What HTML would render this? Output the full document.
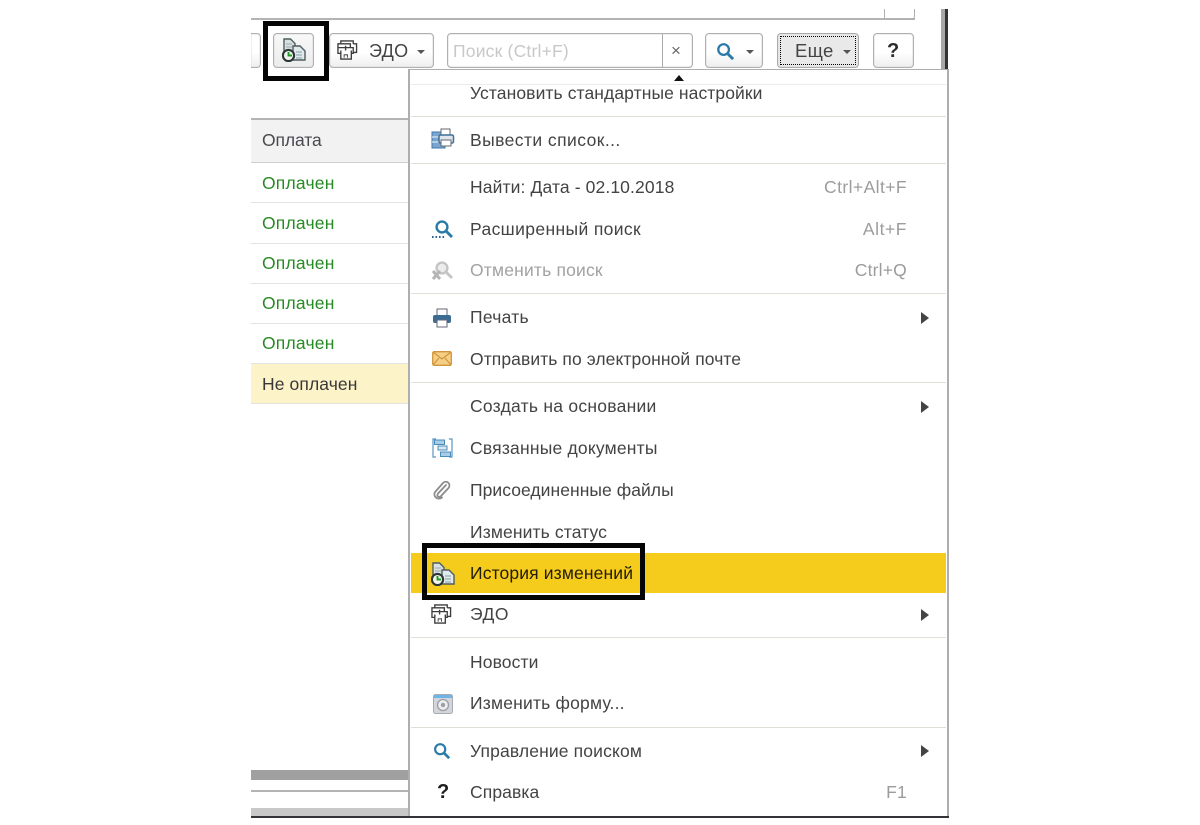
<!DOCTYPE html>
<html lang="ru"><head><meta charset="utf-8"><title>История изменений</title>
<style>
html,body{margin:0;padding:0;background:#fff}
#p{position:relative;width:1200px;height:825px;overflow:hidden;background:#fff;font-family:"Liberation Sans",sans-serif;color:#434343;filter:blur(.35px)}
#p div{position:absolute;box-sizing:border-box}
.t{font-size:17.5px;line-height:20px;height:20px;white-space:nowrap;left:470px;letter-spacing:.25px}
.k{font-size:17.5px;line-height:20px;height:20px;white-space:nowrap;right:293px;color:#9c9c9c;letter-spacing:.2px}
.s{left:411px;width:535px;height:1px;background:#e0e0d4}
.b{top:33px;height:35px;border:1px solid #b0b0b0;border-radius:4px;background:linear-gradient(#fff 55%,#eeeeee);box-shadow:inset 0 0 0 .5px #ddd}
.g{left:262px;font-size:17.5px;line-height:20px;height:20px;white-space:nowrap;color:#278a24;letter-spacing:.2px}
.l{left:251px;width:157px;height:1px;background:#e3e3e3}
.ar{left:921px;width:0;height:0;border-left:8px solid #444;border-top:6px solid transparent;border-bottom:6px solid transparent}
.dn{width:0;height:0;border-top:4px solid #555;border-left:4px solid transparent;border-right:4px solid transparent}
svg{position:absolute;overflow:visible}
</style></head><body><div id="p">
<svg width="0" height="0" style="left:0;top:0"><defs>
<symbol id="hist" viewBox="0 0 24 24"><path d="M2 1h6.500L13 5.500V17H2z" fill="#d9e1e2" stroke="#4f5d60" stroke-width="1.400"/><path d="M4 6h6M4 9h6" stroke="#9aa8ab"/><path d="M11 8h7l5 5v9H11z" fill="#e0e9eb" stroke="#4f5d60" stroke-width="1.400"/><path d="M14 14h6M14 17h6M14 20h6" stroke="#86a0a6" stroke-width="1.100"/><circle cx="6.500" cy="17.500" r="5.600" fill="#f2f5ee" stroke="#2c3736" stroke-width="2.100"/><path d="M6.500 14v3.500H10" stroke="#1f9a25" stroke-width="1.900" fill="none"/></symbol>
<symbol id="edo" viewBox="0 0 22 22"><path d="M1 8V4h13v4M4 4V1h13v3M17 4h3.500v9H17M1 8h16v6h-2M1 8v6h3" fill="none" stroke="#3c3c3c" stroke-width="1.400"/><path d="M4 11v9h11v-9M9 11V6" fill="none" stroke="#3c3c3c" stroke-width="1.400"/><path d="M7.500 18.500v-3h3.500v3" fill="none" stroke="#555" stroke-width="1.100"/></symbol>
<symbol id="mag" viewBox="0 0 20 20"><circle cx="8" cy="8" r="5.600" fill="none" stroke="#2a7aa8" stroke-width="2.400"/><path d="M12.500 12.500l5.500 5.500" stroke="#2a7aa8" stroke-width="3"/></symbol>
</defs></svg>

<!-- window frame -->
<div style="left:251px;top:18px;width:664px;height:2px;background:#b4b4b4"></div>
<div style="left:884px;top:9px;width:1px;height:10px;background:#b0b0b0"></div>
<div style="left:885px;top:9px;width:30px;height:11px;border-right:1px solid #b0b0b0;border-bottom:1px solid #b0b0b0;border-radius:0 0 4px 0"></div>
<div style="left:941px;top:9px;width:4px;height:60px;background:#a8a8a8"></div>
<div style="left:945px;top:9px;width:3px;height:60px;background:#333"></div>

<!-- toolbar -->
<div class="b" style="left:251px;width:10px;border-left:0;border-radius:0 4px 4px 0"></div>
<div class="b" style="left:273px;width:41px;background:linear-gradient(#f8f8f8,#ececec)"></div>
<svg style="left:282px;top:38px" width="24" height="24"><use href="#hist"/></svg>
<div class="b" style="left:329px;width:105px"></div>
<svg style="left:337px;top:40px" width="21" height="21"><use href="#edo"/></svg>
<div style="left:369px;top:41px;font-size:18px;line-height:20px;letter-spacing:.3px;color:#434343">ЭДО</div>
<div class="dn" style="left:417px;top:50px"></div>
<div class="b" style="left:447px;width:246px;background:#fff"></div>
<div style="left:662px;top:34px;width:1px;height:33px;background:#aaa"></div>
<div style="left:453px;top:41px;font-size:17.5px;line-height:20px;color:#c8c8c8;letter-spacing:.2px">Поиск (Ctrl+F)</div>
<div style="left:671px;top:41px;font-size:17px;line-height:20px;color:#666">×</div>
<div class="b" style="left:705px;width:58px"></div>
<svg style="left:716px;top:42px" width="19" height="19"><use href="#mag"/></svg>
<div class="dn" style="left:746px;top:50px"></div>
<div class="b" style="left:777px;width:82px;background:#e9e9e9;border-color:#aaa"></div>
<div style="left:780px;top:36px;width:76px;height:29px;border:1px dotted #000"></div>
<div style="left:795px;top:41px;font-size:18.5px;line-height:20px;color:#434343;letter-spacing:.3px">Еще</div>
<div class="dn" style="left:843px;top:50px"></div>
<div class="b" style="left:873px;width:41px"></div>
<div style="left:887px;top:40px;font-size:20px;line-height:22px;font-weight:bold;color:#2b2b2b">?</div>

<!-- table -->
<div style="left:251px;top:118px;width:157px;height:2px;background:#b4b4b4"></div>
<div style="left:251px;top:120px;width:157px;height:42px;background:#f2f2f2"></div>
<div style="left:251px;top:162px;width:157px;height:1px;background:#cfcfcf"></div>
<div style="left:262px;top:130px;font-size:17.5px;line-height:20px;letter-spacing:-.1px;color:#48484e">Оплата</div>
<div class="g" style="top:173px">Оплачен</div><div class="l" style="top:202px"></div>
<div class="g" style="top:213px">Оплачен</div><div class="l" style="top:243px"></div>
<div class="g" style="top:253px">Оплачен</div><div class="l" style="top:283px"></div>
<div class="g" style="top:293px">Оплачен</div><div class="l" style="top:323px"></div>
<div class="g" style="top:333px">Оплачен</div><div class="l" style="top:363px"></div>
<div style="left:251px;top:364px;width:157px;height:39px;background:#fdf3c9"></div>
<div style="left:262px;top:374px;font-size:17.5px;line-height:20px;letter-spacing:.1px;color:#383838">Не оплачен</div>
<div class="l" style="top:403px"></div>
<div style="left:251px;top:770px;width:157px;height:10px;background:#a0a0a0"></div>
<div style="left:251px;top:790px;width:157px;height:2px;background:#b4b4b4"></div>
<div style="left:251px;top:808px;width:157px;height:8px;background:#c8c8c8"></div>

<!-- menu -->
<div style="left:408px;top:69px;width:541px;height:748px;background:#fff;border:1px solid #aeaeae;border-width:1px 2px 0 2px"></div>
<div style="left:411px;top:84px;width:535px;height:1px;background:#ececec"></div>
<div style="left:674px;top:75px;width:0;height:0;border-bottom:6px solid #111;border-left:5px solid transparent;border-right:5px solid transparent"></div>
<div style="left:251px;top:816px;width:698px;height:2px;background:#33333a"></div>

<div class="s" style="top:116px"></div><div class="s" style="top:163px"></div>
<div class="s" style="top:293px"></div><div class="s" style="top:382px"></div>
<div class="s" style="top:637px"></div><div class="s" style="top:727px"></div>

<div style="left:411px;top:553px;width:535px;height:40px;background:#f5cb1c"></div>

<div class="t" style="top:83px;letter-spacing:.09px">Установить стандартные настройки</div>
<div class="t" style="top:130px;letter-spacing:.43px">Вывести список...</div>
<div class="t" style="top:177px;letter-spacing:.12px">Найти: Дата - 02.10.2018</div><div class="k" style="top:177px;letter-spacing:.42px">Ctrl+Alt+F</div>
<div class="t" style="top:219px;letter-spacing:.37px">Расширенный поиск</div><div class="k" style="top:219px;letter-spacing:.55px">Alt+F</div>
<div class="t" style="top:260px;color:#a2a2a2;letter-spacing:.18px">Отменить поиск</div><div class="k" style="top:260px">Ctrl+Q</div>
<div class="t" style="top:307px">Печать</div><div class="ar" style="top:312px"></div>
<div class="t" style="top:349px;letter-spacing:.08px">Отправить по электронной почте</div>
<div class="t" style="top:396px">Создать на основании</div><div class="ar" style="top:401px"></div>
<div class="t" style="top:438px;letter-spacing:.2px">Связанные документы</div>
<div class="t" style="top:480px;letter-spacing:.05px">Присоединенные файлы</div>
<div class="t" style="top:522px;letter-spacing:.12px">Изменить статус</div>
<div class="t" style="top:563px;color:#221c08;letter-spacing:.13px">История изменений</div>
<div class="t" style="top:604px;letter-spacing:.5px">ЭДО</div><div class="ar" style="top:609px"></div>
<div class="t" style="top:652px;letter-spacing:.1px">Новости</div>
<div class="t" style="top:693px;letter-spacing:.19px">Изменить форму...</div>
<div class="t" style="top:741px;letter-spacing:.14px">Управление поиском</div><div class="ar" style="top:745px"></div>
<div class="t" style="top:782px;letter-spacing:.1px">Справка</div><div class="k" style="top:782px">F1</div>

<!-- menu icons -->
<svg style="left:431px;top:128px" width="23" height="22" viewBox="0 0 23 22"><rect x="1" y="4" width="13" height="16" fill="#7aa5cf" stroke="#3d76ad"/><path d="M1 9h13M1 14h13" stroke="#dbe8f3" stroke-width="1.200"/><rect x="10" y="1" width="9" height="7" fill="#fff" stroke="#667"/><rect x="8" y="7" width="14.500" height="8" rx="1.500" fill="#dfe5ea" stroke="#3f6f96" stroke-width="1.500"/><rect x="10" y="12" width="10" height="6" fill="#fff" stroke="#667"/></svg>
<svg style="left:431px;top:220px" width="22" height="19" viewBox="0 0 22 19"><g transform="translate(3 0)"><circle cx="8" cy="7" r="5.400" fill="none" stroke="#2a7aa8" stroke-width="2.400"/><path d="M12 11l6 6" stroke="#2a7aa8" stroke-width="2.800"/></g><path d="M1 17h1.600M4.500 17h1.600M8 17h1.600M11.500 17h1.600" stroke="#2f5f8f" stroke-width="2"/></svg>
<svg style="left:431px;top:261px" width="22" height="20" viewBox="0 0 22 20"><g transform="translate(3 0)"><circle cx="8" cy="7" r="5.400" fill="#ececec" stroke="#c4c4c4" stroke-width="2.400"/><path d="M12 11l6 6" stroke="#c4c4c4" stroke-width="2.800"/></g><path d="M2 10l7 8M9 10l-7 8" stroke="#b4b4b4" stroke-width="3"/></svg>
<svg style="left:432px;top:308px" width="20" height="20" viewBox="0 0 20 20"><rect x="5" y="1" width="10" height="7" fill="#fff" stroke="#667"/><rect x="1" y="7" width="18" height="8" rx="2" fill="#3a6c94"/><rect x="5" y="12" width="10" height="7" fill="#fff" stroke="#667"/></svg>
<svg style="left:432px;top:351px" width="20" height="15" viewBox="0 0 20 15"><rect x=".7" y=".7" width="18.600" height="13.600" rx="1.500" fill="#f6cf86" stroke="#d0953a" stroke-width="1.300"/><path d="M1 1l9 7 9-7M1 14l6-7M19 14l-6-7" fill="none" stroke="#d0953a" stroke-width="1.200"/></svg>
<svg style="left:432px;top:438px" width="21" height="20" viewBox="0 0 21 20" fill="none"><path d="M4 1H1v18h3M17 1h3v18h-3" stroke="#5b97c4" stroke-width="1.200"/><rect x="2.500" y="2" width="10" height="4.500" fill="#a9cde6" stroke="#4a8cbc"/><rect x="6" y="8" width="9" height="4" fill="#d7e8f4" stroke="#4a8cbc"/><rect x="8.500" y="14" width="10" height="4.500" fill="#a9cde6" stroke="#4a8cbc"/></svg>
<svg style="left:433px;top:480px" width="18" height="20" viewBox="0 0 18 20" fill="none"><path d="M13 5l-8 8.500c-2 2.500 1 4.500 3 2.500l7.500-8c3-4-2-8.500-5.500-5L2.500 11.500c-3.500 4 2 9.500 6.500 6" stroke="#8c8c8c" stroke-width="1.800" stroke-linecap="round"/></svg>
<svg style="left:431px;top:562px" width="24" height="24"><use href="#hist"/></svg>
<svg style="left:431px;top:604px" width="21" height="21"><use href="#edo"/></svg>
<svg style="left:433px;top:694px" width="20" height="20" viewBox="0 0 20 20"><rect x=".5" y=".5" width="19" height="19" rx="2" fill="#d2d6da" stroke="#a8acb0"/><rect x="1" y="1" width="18" height="3" fill="#6fb4e6"/><circle cx="10" cy="11" r="5.500" fill="#eceef0" stroke="#9aa0a6" stroke-width="1.300"/><circle cx="10" cy="11" r="2.200" fill="#9aa0a6"/></svg>
<svg style="left:433px;top:742px" width="18" height="18"><use href="#mag"/></svg>
<div style="left:437px;top:781px;font-size:20px;line-height:22px;font-weight:bold;color:#1c1c1c">?</div>

<!-- annotation boxes -->
<div style="left:263px;top:21px;width:66px;height:60px;border:5px solid #050505"></div>
<div style="left:422px;top:543px;width:223px;height:57px;border:5px solid #050505"></div>
</div></body></html>
